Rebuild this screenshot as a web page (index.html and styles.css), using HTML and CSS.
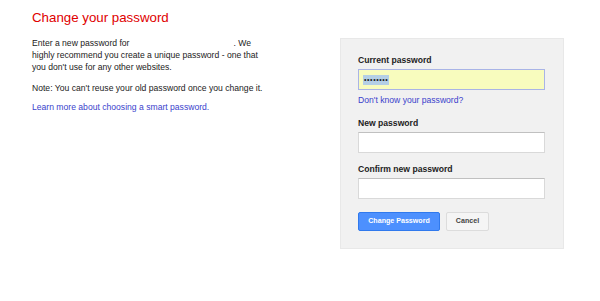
FILE: index.html
```html
<!DOCTYPE html>
<html>
<head>
<meta charset="utf-8">
<link rel="stylesheet" href="styles.css">
</head>
<body>
<div class="page">
  <h1 class="title">Change your password</h1>
  <div class="row">
    <div class="intro">
      <p class="para">Enter a new password for<span class="blank"></span>. We highly recommend you create a unique password - one that you don't use for any other websites.</p>
      <p class="para para-note">Note: You can't reuse your old password once you change it.</p>
      <p class="para"><a class="link" href="#">Learn more about choosing a smart password.</a></p>
    </div>
    <form class="panel">
      <label class="label">Current password</label>
      <div class="input focused"><span class="dots">&bull;&bull;&bull;&bull;&bull;&bull;&bull;&bull;</span></div>
      <a class="link forgot" href="#">Don't know your password?</a>
      <label class="label label-gap">New password</label>
      <div class="input"></div>
      <label class="label label-gap">Confirm new password</label>
      <div class="input"></div>
      <div class="buttons">
        <button type="button" class="btn btn-primary">Change Password</button>
        <button type="button" class="btn btn-cancel">Cancel</button>
      </div>
    </form>
  </div>
</div>
</body>
</html>
```
FILE: styles.css
```css
html, body {
  margin: 0;
  padding: 0;
  background: #fff;
}
body {
  font-family: Arial, "Liberation Sans", Helvetica, sans-serif;
  color: #222;
  font-size: 8.6px;
}
.page {
  padding: 9px 0 0 32px;
}
.title {
  margin: 0;
  font-size: 13.3px;
  line-height: 18px;
  font-weight: normal;
  color: #e00000;
}
.row {
  display: flex;
  align-items: flex-start;
  margin-top: 10px;
}
.intro {
  width: 236px;
  margin-right: 72px;
}
.para {
  margin: 0 0 9px 0;
  line-height: 12px;
}
.para-note {
  margin-bottom: 7px;
}
.blank {
  padding-left: 104px;
}
.link {
  color: #3a3fcc;
  text-decoration: none;
}
.panel {
  width: 187px;
  margin-top: 1px;
  padding: 14px 18px 17px 17px;
  background: #f1f1f1;
  border: 1px solid #e8e8e8;
  display: flex;
  flex-direction: column;
}
.label {
  font-weight: bold;
  line-height: 14px;
  margin-bottom: 2px;
  color: #222;
}
.label-gap {
  margin-top: 9px;
}
.input {
  box-sizing: border-box;
  height: 21px;
  background: #fff;
  border: 1px solid #d9d9d9;
  border-top-color: #c0c0c0;
  display: flex;
  align-items: center;
  padding-left: 4px;
}
.input.focused {
  background: #f8fcbe;
  border-color: #a9b4e6;
}
.dots {
  background: #b4cfe6;
  color: #222;
  line-height: 10px;
  font-size: 7px;
  letter-spacing: 0.6px;
  padding: 0 1px;
}
.forgot {
  display: block;
  margin-top: 3px;
  line-height: 14px;
  align-self: flex-start;
}
.buttons {
  display: flex;
  gap: 6px;
  margin-top: 13px;
}
.btn {
  box-sizing: border-box;
  height: 19px;
  font-family: Arial, "Liberation Sans", Helvetica, sans-serif;
  font-size: 7.1px;
  font-weight: bold;
  border-radius: 2px;
  padding: 0;
  line-height: 17px;
  white-space: nowrap;
  text-align: center;
}
.btn-primary {
  width: 82px;
  background: #4d90fe;
  border: 1px solid #3079ed;
  color: #fff;
}
.btn-cancel {
  width: 43px;
  background: #f5f5f5;
  border: 1px solid #dcdcdc;
  color: #444;
}
```
